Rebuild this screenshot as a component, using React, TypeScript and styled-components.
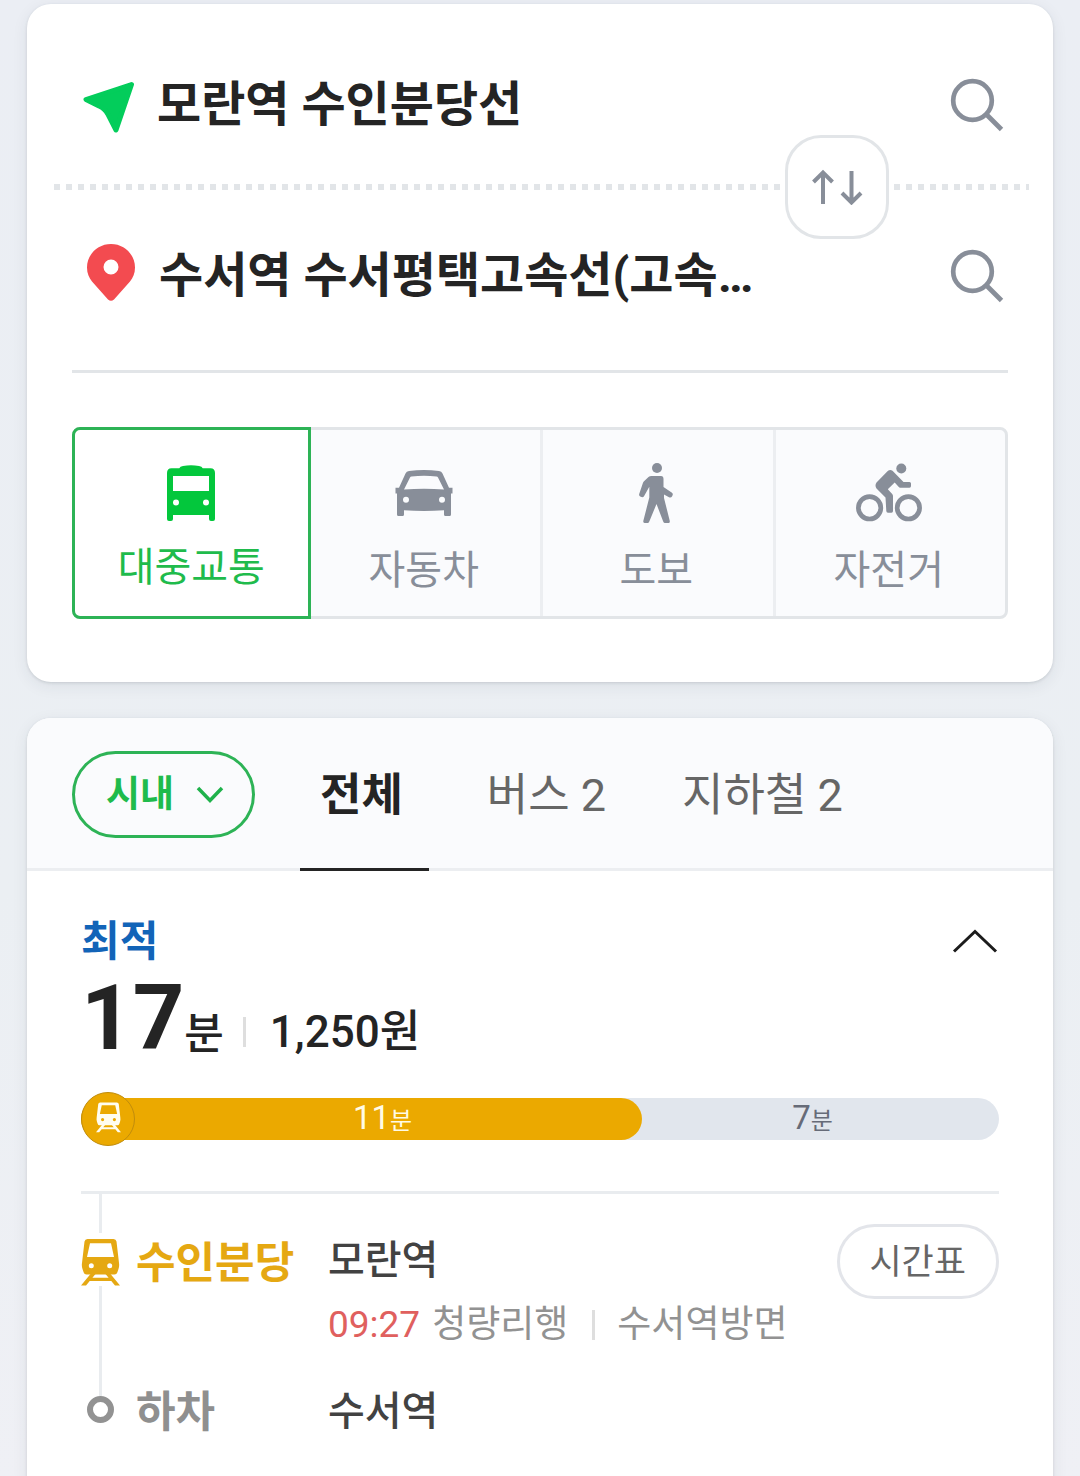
import React, { useState } from 'react';
import styled, { createGlobalStyle, css } from 'styled-components';

const GlobalStyle = createGlobalStyle`
  *, *::before, *::after { box-sizing: border-box; }
  body {
    margin: 0;
    color: #242424;
    font-family: Roboto, "Noto Sans CJK KR", sans-serif;
    background: linear-gradient(#ebeef4, #ebeff3 60%, #eff0f5);
  }
  button, input, select {
    margin: 0;
    padding: 0;
    border: 0;
    border-radius: 0;
    background: none;
    color: inherit;
    font: inherit;
    outline: 0;
  }
  button, select { cursor: pointer; }
  svg { display: block; flex: none; }
`;

const Page = styled.main`
  display: flex;
  flex-direction: column;
  gap: 36px;
  min-height: 100vh;
  padding: 4px 27px 0;
`;

const Card = styled.section<{ $open?: boolean }>`
  flex: ${(p) => (p.$open ? '1 0 auto' : 'none')};
  background: #fff;
  border-radius: ${(p) => (p.$open ? '24px 24px 0 0' : '24px')};
  box-shadow: 0 1px 3px rgba(40, 50, 60, 0.14), 0 4px 16px rgba(40, 50, 60, 0.08);
`;

/* Search */

const PlaceRow = styled.div<{ $last?: boolean }>`
  display: flex;
  align-items: center;
  gap: 19px;
  height: 180px;
  padding: ${(p) => (p.$last ? '0 49px 8px 55px' : '22px 49px 0 53px')};
`;

const PlaceLabel = styled.label`
  display: flex;
  justify-content: center;
  width: 58px;
`;

const PlaceInput = styled.input`
  flex: 1;
  min-width: 0;
  height: 72px;
  font-size: 48px;
  line-height: 72px;
  font-weight: 700;
`;

const IconButton = styled.button`
  display: grid;
  place-items: center;
  flex: none;
`;

const Dots = styled.div`
  position: relative;
  height: 6px;
  margin: 0 24px 0 27px;
  background: repeating-linear-gradient(90deg, #e2e5e8 0 6px, transparent 6px 12px);
`;

const SwapButton = styled.button`
  position: absolute;
  top: 50%;
  right: 140px;
  display: grid;
  place-items: center;
  width: 104px;
  height: 104px;
  border: 3px solid #e2e5e8;
  border-radius: 36px;
  background: #fff;
  box-shadow: 0 0 0 5px #fff;
  transform: translateY(-50%);
`;

const Modes = styled.div`
  padding: 0 45px 63px;
`;

const ModeList = styled.div`
  display: grid;
  grid-template-columns: repeat(4, 1fr);
  height: 192px;
  margin-top: 54px;
  border: 3px solid #e2e5e8;
  border-radius: 8px;
  background: #fafbfd;
`;

const Rule = styled.hr<{ $light?: boolean }>`
  height: 3px;
  margin: 0;
  border: 0;
  background: ${(p) => (p.$light ? '#e9ecef' : '#e2e5e8')};
`;

const ModeButton = styled.button<{ $active: boolean }>`
  display: flex;
  flex-direction: column;
  align-items: center;
  padding-top: 30px;
  color: #888e99;
  font-size: 40px;
  line-height: 64px;
  box-shadow: inset 3px 0 0 #eceef1;
  &:first-child { box-shadow: none; }
  ${(p) =>
    p.$active &&
    css`
      position: relative;
      margin: -3px;
      border: 3px solid #2db356;
      background: #fff;
      color: #1fbb4c;
      box-shadow: none;
      &:first-child { border-radius: 8px 0 0 8px; }
      &:last-child { border-radius: 0 8px 8px 0; }
    `}
`;

const ModeIcon = styled.span<{ $active: boolean }>`
  display: grid;
  place-items: center;
  height: 66px;
  margin-bottom: ${(p) => (p.$active ? '10px' : '13px')};
  color: ${(p) => (p.$active ? '#03c73c' : 'inherit')};
`;

/* Results */

const TabBar = styled.header`
  display: flex;
  height: 153px;
  padding-left: 45px;
  background: #fafbfd;
  border-radius: 24px 24px 0 0;
  box-shadow: inset 0 -3px 0 #eceef1;
`;

const AreaPicker = styled.label`
  display: grid;
  align-items: center;
  align-self: flex-start;
  margin: 33px 45px 0 0;
  color: #1fbb4c;
  > * { grid-area: 1 / 1; }
  svg { justify-self: end; margin-right: 31px; pointer-events: none; }
`;

const AreaSelect = styled.select`
  appearance: none;
  height: 87px;
  padding: 0 77px 0 31px;
  border: 3px solid #2db356;
  border-radius: 44px;
  font-size: 37px;
  font-weight: 700;
`;

const TabList = styled.div`
  display: flex;
  gap: 39px;
`;

const Tab = styled.button<{ $active: boolean }>`
  padding: ${(p) => (p.$active ? '6px 26px 0 20px' : '6px 18px 0 19px')};
  border-bottom: 3px solid ${(p) => (p.$active ? '#242424' : 'transparent')};
  color: ${(p) => (p.$active ? '#242424' : '#666')};
  font-size: 45px;
  line-height: 66px;
  font-weight: ${(p) => (p.$active ? 700 : 400)};
  white-space: nowrap;
`;

const Route = styled.article`
  padding: 38px 54px 36px;
`;

const RouteHead = styled.div`
  display: flex;
  align-items: center;
  justify-content: space-between;
  height: 66px;
`;

const Badge = styled.h2`
  margin: 0;
  color: #1264b8;
  font-size: 42px;
  line-height: 60px;
  font-weight: 700;
`;

const Summary = styled.p`
  display: flex;
  align-items: flex-end;
  margin: 0;
  font-size: 44px;
  line-height: 62px;
  font-weight: 500;
`;

const Duration = styled.span`
  display: flex;
  align-items: baseline;
  font-size: 43px;
  line-height: 48px;
`;

const Minutes = styled.strong`
  font-size: 90px;
  line-height: 88px;
  font-weight: 700;
`;

const Separator = styled.span`
  width: 3px;
  height: 30px;
  margin: 0 24px 16px 19px;
  background: #dedede;
`;

const Bar = styled.div`
  position: relative;
  display: flex;
  height: 42px;
  margin: 35px 0 51px;
  border-radius: 21px;
  background: #e1e6ed;
`;

const Segment = styled.div<{ $ride?: boolean }>`
  display: flex;
  align-items: baseline;
  justify-content: center;
  height: 42px;
  padding: ${(p) => (p.$ride ? '0 0 0 42px' : '0 16px 0 0')};
  border-radius: 21px;
  background: ${(p) => (p.$ride ? '#eba900' : 'transparent')};
  color: ${(p) => (p.$ride ? '#fffbe6' : '#666b78')};
  font-size: 33px;
  line-height: 40px;
  small { font-size: 24px; }
`;

const RideBadge = styled.span`
  position: absolute;
  top: -6px;
  left: 0;
  display: grid;
  place-items: center;
  width: 54px;
  height: 54px;
  padding-bottom: 4px;
  border: 1px solid #c08c0c;
  border-radius: 50%;
  background: #eba900;
  color: #fffdf0;
`;

const Steps = styled.ol`
  margin: 0;
  padding: 0;
  list-style: none;
`;

const Step = styled.li<{ $ride?: boolean }>`
  display: grid;
  grid-template-columns: 39px 176px 1fr auto;
  column-gap: 16px;
  height: ${(p) => (p.$ride ? '188px' : '66px')};
`;

const Rail = styled.div<{ $ride?: boolean }>`
  display: flex;
  flex-direction: column;
  align-items: center;
  margin-bottom: ${(p) => (p.$ride ? '-14px' : '0')};
  padding-top: ${(p) => (p.$ride ? '0' : '14px')};
  color: #e5a812;
`;

const RailLine = styled.span<{ $lead?: boolean }>`
  flex: ${(p) => (p.$lead ? '0 0 39px' : '1')};
  width: 3px;
  margin-bottom: ${(p) => (p.$lead ? '6px' : '0')};
  background: #e9ecef;
`;

const Ring = styled.span`
  width: 27px;
  height: 27px;
  border: 6px solid #929292;
  border-radius: 50%;
`;

const StepName = styled.strong<{ $ride?: boolean }>`
  padding-top: ${(p) => (p.$ride ? '39px' : '0')};
  color: ${(p) => (p.$ride ? '#e5a812' : '#8f8f8f')};
  font-size: 43px;
  line-height: 60px;
  font-weight: 700;
  white-space: nowrap;
`;

const Stop = styled.div<{ $ride?: boolean }>`
  padding-top: ${(p) => (p.$ride ? '37px' : '0')};
  color: #424242;
  font-size: 40px;
  line-height: 60px;
  font-weight: 500;
`;

const Departure = styled.p`
  display: flex;
  align-items: center;
  margin: 6px 0 0;
  color: #929292;
  font-size: 37px;
  line-height: 56px;
  font-weight: 400;
  white-space: nowrap;
  time { margin-right: 12px; color: #e0605e; }
  ${Separator} { margin: 0 22px 0 24px; }
`;

const TimetableButton = styled.button`
  height: 75px;
  margin-top: 30px;
  padding: 0 30px 6px 29px;
  border: 3px solid #e3e5ea;
  border-radius: 38px;
  color: #666;
  font-size: 35px;
`;

/* Icons */

const ArrowIcon = () => (
  <svg width="54" height="60" viewBox="0 -4 54 60" fill="#03cd5b" stroke="#03cd5b" strokeWidth="5" strokeLinejoin="round" aria-hidden="true">
    <path d="M49.500 5.500L4 20.500L17 27Q23 29.500 26 35.500L34 51Z" />
  </svg>
);

const PinIcon = () => (
  <svg width="48" height="65" viewBox="0 0 48 65" aria-hidden="true">
    <path
      fill="#f34b50"
      fillRule="evenodd"
      d="M24 0C10.700 0 0 10.500 0 23.500C0 29.500 2 33.500 5 37.500L21 55.500Q24 58.200 27 55.500L43 37.500C46 33.500 48 29.500 48 23.500C48 10.500 37.300 0 24 0ZM24 15.500A7.500 7.500 0 1 1 24 30.500A7.500 7.500 0 1 1 24 15.500Z"
    />
  </svg>
);

const SearchIcon = () => (
  <svg width="54" height="54" viewBox="0 0 54 54" fill="none" stroke="#888e99" strokeWidth="4.700" aria-hidden="true">
    <circle cx="22.500" cy="22.500" r="19.300" />
    <path d="M36 36L51.500 51.500" />
  </svg>
);

const SwapIcon = () => (
  <svg width="52" height="36" viewBox="0 0 52 36" fill="none" stroke="#888e99" strokeWidth="4" aria-hidden="true">
    <path d="M12 35V4M2.500 13L12 3.500L21.500 13M40.500 2V33M31 24L40.500 33.500L50 24" />
  </svg>
);

const BusIcon = () => (
  <svg width="48" height="56" viewBox="0 0 48 56" fill="currentColor" aria-hidden="true">
    <path
      fillRule="evenodd"
      d="M12.300 3.300Q13 1.500 16 1Q24 -0.700 32 1Q35 1.500 35.700 3.300H43.500Q48 3.300 48 8V54Q48 56 46 56H44Q42 56 42 54V50H6V54Q6 56 4 56H2Q0 56 0 54V8Q0 3.300 4.500 3.300ZM6 11V26H42V11ZM9 34.500A3 3 0 1 0 9 40.500A3 3 0 1 0 9 34.500ZM39 34.500A3 3 0 1 0 39 40.500A3 3 0 1 0 39 34.500Z"
    />
  </svg>
);

const CarIcon = () => (
  <svg width="58" height="46" viewBox="0 0 58 46" fill="currentColor" aria-hidden="true">
    <path
      fillRule="evenodd"
      d="M0.500 17.700H4L10.500 3.500Q11.500 1.300 14 1Q29 -0.800 44 1Q46.500 1.300 47.500 3.500L54 17.700H57.500V23.500H56V44.500Q56 46 54.500 46H50.500Q49 46 49 44.500V40.300Q29 41.500 9 40.300V44.500Q9 46 7.500 46H3.500Q2 46 2 44.500V23.500H0.500ZM15 7.500Q15.500 6.500 16.500 6.400Q29 5.200 41.500 6.400Q42.500 6.500 43 7.500L49 19.500Q29 18 9 19.500ZM11 26.800A3 3 0 1 0 11 32.800A3 3 0 1 0 11 26.800ZM47 26.800A3 3 0 1 0 47 32.800A3 3 0 1 0 47 26.800Z"
    />
  </svg>
);

const WalkIcon = () => (
  <svg width="34" height="60" viewBox="0 0 34 60" fill="currentColor" aria-hidden="true">
    <circle cx="18" cy="5" r="5" />
    <path d="M12.500 13H22Q24.500 13 24.500 16V24L33 29.800Q34.200 30.800 33.600 32.200L33 33.500Q32 35 30 34.200L25 31.500V35L30.800 58Q31 60 29.500 60H26Q24.800 60 24.200 58.500L17.500 41L10.300 58.500Q9.700 60 8.500 60H5.500Q4 60 4.300 58L10.300 34.500V23.800L5 33.200Q4.200 34.500 2.500 34L1.200 33.500Q-0.300 32.800 0.200 31L4 19.800Q4.300 19 5 18.300L9.500 14Q10.700 13 12.500 13Z" />
  </svg>
);

const BikeIcon = () => (
  <svg width="66" height="60" viewBox="0 0 66 60" fill="currentColor" aria-hidden="true">
    <circle cx="45.300" cy="5.500" r="5" />
    <g fill="none" stroke="currentColor" strokeWidth="4.700">
      <circle cx="13.600" cy="44.800" r="11.200" />
      <circle cx="52.400" cy="44.800" r="11.200" />
    </g>
    <path d="M32 7.800Q34.300 6 36.500 7.800L47.500 19H53.500Q55 19.200 55 20.500V23Q55 24.700 53.500 24.700H44Q43.400 24.700 42.800 24L38.700 19.500L31.800 26.300L36.200 31Q37 31.800 37 33V48Q37 49.800 35.500 49.800H32Q30.400 49.800 30.300 48L29.500 34.500L20.500 25.500Q18.500 22.500 20.500 19.500Z" />
  </svg>
);

const TrainIcon = ({ width, height }: { width: number; height: number }) => (
  <svg width={width} height={height} viewBox="0 0 39 47" fill="currentColor" aria-hidden="true">
    <path
      fillRule="evenodd"
      d="M6.500 0H32.500Q35 0 35.500 2.500L38 24Q38.500 27 37.500 30L36.300 33.500Q35.700 35.500 33.500 35.500H5.500Q3.300 35.500 2.700 33.500L1.500 30Q0.500 27 1 24L3.500 2.500Q4 0 6.500 0ZM9 4.300L6 18H33L30 4.300ZM10.300 24.200A2.500 2.500 0 1 0 10.300 29.200A2.500 2.500 0 1 0 10.300 24.200ZM28.700 24.200A2.500 2.500 0 1 0 28.700 29.200A2.500 2.500 0 1 0 28.700 24.200Z"
    />
    <path d="M9.500 35H14.500L5 46.500H0ZM24.500 35H29.500L39 46.500H34ZM8 38.800H31V42H8Z" />
  </svg>
);

const ChevronDown = () => (
  <svg width="28" height="18" viewBox="0 0 28 18" fill="none" stroke="#1fb24b" strokeWidth="3.500" aria-hidden="true">
    <path d="M2 2L14 14.500L26 2" />
  </svg>
);

const ChevronUp = () => (
  <svg width="48" height="26" viewBox="0 0 48 26" fill="none" stroke="#1c1c1c" strokeWidth="3" aria-hidden="true">
    <path d="M3 22.500L24 2.500L45 22.500" />
  </svg>
);

const modes = [
  { name: '대중교통', Icon: BusIcon },
  { name: '자동차', Icon: CarIcon },
  { name: '도보', Icon: WalkIcon },
  { name: '자전거', Icon: BikeIcon },
];

const tabs = ['전체', '버스 2', '지하철 2'];

const segments = [
  { minutes: 11, ride: true },
  { minutes: 7, ride: false },
];

const total = segments.reduce((sum, s) => sum + s.minutes, 0);

export default function App() {
  const [places, setPlaces] = useState(['모란역 수인분당선', '수서역 수서평택고속선(고속…']);
  const [mode, setMode] = useState(0);
  const [tab, setTab] = useState(0);
  const [open, setOpen] = useState(true);

  const edit = (index: number) => (e: React.ChangeEvent<HTMLInputElement>) =>
    setPlaces(places.map((p, i) => (i === index ? e.target.value : p)));

  return (
    <>
      <GlobalStyle />
      <Page>
        <Card>
          <PlaceRow>
            <PlaceLabel htmlFor="from" aria-label="출발지"><ArrowIcon /></PlaceLabel>
            <PlaceInput id="from" value={places[0]} onChange={edit(0)} />
            <IconButton aria-label="출발지 검색"><SearchIcon /></IconButton>
          </PlaceRow>
          <Dots>
            <SwapButton aria-label="출발지와 도착지 바꾸기" onClick={() => setPlaces([places[1], places[0]])}>
              <SwapIcon />
            </SwapButton>
          </Dots>
          <PlaceRow $last>
            <PlaceLabel htmlFor="to" aria-label="도착지"><PinIcon /></PlaceLabel>
            <PlaceInput id="to" value={places[1]} onChange={edit(1)} />
            <IconButton aria-label="도착지 검색"><SearchIcon /></IconButton>
          </PlaceRow>
          <Modes>
            <Rule />
            <ModeList>
              {modes.map(({ name, Icon }, i) => (
                <ModeButton key={name} $active={i === mode} aria-pressed={i === mode} onClick={() => setMode(i)}>
                  <ModeIcon $active={i === mode}><Icon /></ModeIcon>
                  {name}
                </ModeButton>
              ))}
            </ModeList>
          </Modes>
        </Card>

        <Card $open>
          <TabBar>
            <AreaPicker>
              <AreaSelect aria-label="지역" defaultValue="시내">
                <option>시내</option>
                <option>시외</option>
              </AreaSelect>
              <ChevronDown />
            </AreaPicker>
            <TabList role="tablist">
              {tabs.map((name, i) => (
                <Tab key={name} role="tab" aria-selected={i === tab} $active={i === tab} onClick={() => setTab(i)}>
                  {name}
                </Tab>
              ))}
            </TabList>
          </TabBar>

          <Route>
            <RouteHead>
              <Badge>최적</Badge>
              <IconButton aria-label="상세 경로" aria-expanded={open} onClick={() => setOpen(!open)}>
                <ChevronUp />
              </IconButton>
            </RouteHead>
            <Summary>
              <Duration>
                <Minutes>17</Minutes>분
              </Duration>
              <Separator />
              1,250원
            </Summary>
            <Bar>
              {segments.map((s) => (
                <Segment key={s.minutes} $ride={s.ride} style={{ width: `${(s.minutes / total) * 100}%` }}>
                  {s.minutes}
                  <small>분</small>
                </Segment>
              ))}
              <RideBadge><TrainIcon width={25} height={31} /></RideBadge>
            </Bar>
            {open && (
              <>
                <Rule $light />
                <Steps>
                  <Step $ride>
                    <Rail $ride>
                      <RailLine $lead />
                      <TrainIcon width={39} height={47} />
                      <RailLine />
                    </Rail>
                    <StepName $ride>수인분당</StepName>
                    <Stop $ride>
                      모란역
                      <Departure>
                        <time>09:27</time>
                        청량리행
                        <Separator />
                        수서역방면
                      </Departure>
                    </Stop>
                    <div>
                      <TimetableButton>시간표</TimetableButton>
                    </div>
                  </Step>
                  <Step>
                    <Rail>
                      <Ring />
                    </Rail>
                    <StepName>하차</StepName>
                    <Stop>수서역</Stop>
                  </Step>
                </Steps>
              </>
            )}
          </Route>
        </Card>
      </Page>
    </>
  );
}
